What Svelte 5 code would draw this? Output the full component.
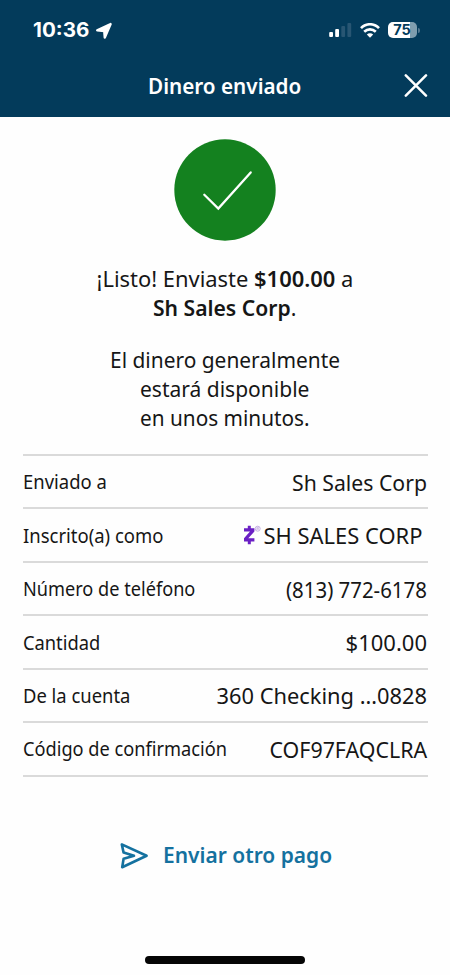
<script>
  const rows = [
    { label: 'Enviado a', lw: 83.5, value: 'Sh Sales Corp', vw: 135 },
    { label: 'Inscrito(a) como', lw: 140, value: 'SH SALES CORP', vw: 158.5, zelle: true },
    { label: 'Número de teléfono', lw: 172, value: '(813) 772-6178', vw: 141 },
    { label: 'Cantidad', lw: 77, value: '$100.00', vw: 81 },
    { label: 'De la cuenta', lw: 107.5, value: '360 Checking …0828', vw: 210.5 },
    { label: 'Código de confirmación', lw: 204, value: 'COF97FAQCLRA', vw: 157.5 }
  ];

  // Condenses a line of text horizontally to the given width.
  function fit(node, width) {
    node.style.transform = `scaleX(${width / node.offsetWidth})`;
  }
</script>

<div class="screen">
  <header>
    <div class="status">
      <div class="clock">
        <span class="time" use:fit={56}>10:36</span>
        <svg width="18" height="18" viewBox="0 0 18 18"><path d="M15.6 2 2.2 8.3 9.2 9 9.8 15.6Z" fill="#fff" stroke="#fff" stroke-width="2.4" stroke-linejoin="round" /></svg>
      </div>
      <div class="signals">
        <svg width="24" height="16" viewBox="0 0 24 16">
          <rect x="0.2" y="10" width="3.8" height="5" rx="1" fill="#fff" />
          <rect x="6.2" y="7" width="3.8" height="8" rx="1" fill="#fff" />
          <rect x="12.3" y="4" width="3.8" height="11" rx="1" fill="#285673" />
          <rect x="18.4" y="1" width="3.8" height="14" rx="1" fill="#285673" />
        </svg>
        <svg class="wifi" width="20" height="15" viewBox="0 0 20 15" fill="none" stroke="#fff" stroke-width="2.6">
          <path d="M1 5.2C6-.1 14-.1 19 5.2" />
          <path d="M4.2 8.8c3.4-3.3 8.2-3.3 11.6 0" />
          <path d="M10 14.8 6.8 11.4c1.8-1.7 4.6-1.7 6.4 0Z" fill="#fff" stroke="none" />
        </svg>
        <div class="battery"><span>75</span></div>
        <i class="nub"></i>
      </div>
    </div>
    <div class="bar">
      <h1 use:fit={153}>Dinero enviado</h1>
      <svg class="close" width="24" height="24" viewBox="0 0 24 24"><path d="M1.8 1.4 22 21.6M22 1.4 1.8 21.6" stroke="#fff" stroke-width="2.5" stroke-linecap="round" /></svg>
    </div>
  </header>

  <main>
    <svg class="check" width="102" height="102" viewBox="0 0 102 102">
      <circle cx="51" cy="51" r="50.7" fill="#14811f" />
      <path d="M30.3 55.8 44.3 69.6 76.7 33.4" fill="none" stroke="#fff" stroke-width="2.3" stroke-linecap="round" />
    </svg>

    <p class="done">
      <span use:fit={257}>¡Listo! Enviaste <b>$100.00</b> a</span>
      <span use:fit={143}><b>Sh Sales Corp</b>.</span>
    </p>
    <p class="note">
      <span use:fit={230}>El dinero generalmente</span>
      <span use:fit={169}>estará disponible</span>
      <span use:fit={170}>en unos minutos.</span>
    </p>

    <dl>
      {#each rows as row}
        <div class="row">
          <dt><span use:fit={row.lw}>{row.label}</span></dt>
          <dd class:zelle={row.zelle}>
            {#if row.zelle}
              <svg width="18" height="21" viewBox="0 0 18 21">
                <path d="M4.8.8h3v2.4h3.6v3.4L5.3 13.2h6.1v3.3H7.8v2.7h-3v-2.7H1v-3.3l6-6.6H1V3.2h3.8Z" fill="#6a1fc4" />
                <circle cx="14.7" cy="3.7" r="2.5" fill="none" stroke="#b79bdc" stroke-width=".8" />
                <path d="M13.9 5.2V2.4h1.1c1 0 1 1.4 0 1.4h-1.1m.9 0 .8 1.4" fill="none" stroke="#b79bdc" stroke-width=".6" />
              </svg>
            {/if}
            <span use:fit={row.vw}>{row.value}</span>
          </dd>
        </div>
      {/each}
    </dl>

    <div class="again">
      <svg width="29" height="28" viewBox="0 0 29 28" fill="none" stroke="#14719f" stroke-width="2.6" stroke-linejoin="round" stroke-linecap="round">
        <path d="M1.8 2.4 26.6 13.8 2.2 25.2 3.6 16.8 14 13.8 3.6 10.6Z" />
      </svg>
      <span use:fit={169.5}>Enviar otro pago</span>
    </div>
  </main>
  <div class="home"></div>
</div>

<style>
  :global(body) { background: #fefefe; }
  .screen {
    width: 450px; height: 975px; display: flex; flex-direction: column;
    overflow: hidden; background: #fefefe; color: #161616;
    font-family: "Noto Sans", sans-serif; font-size: 22px;
  }
  span, h1 { white-space: nowrap; }
  b { font-weight: 600; }
  header { height: 117px; flex: none; background: #033b5b; color: #fff; display: flex; flex-direction: column; }
  .status { height: 60px; display: flex; justify-content: space-between; padding: 0 30px 0 33px; }
  .clock { position: relative; display: flex; align-items: center; width: 100px; }
  .time { flex: none; font: 700 19.5px/24px Inter, sans-serif; transform-origin: left; }
  .clock svg { position: absolute; left: 61.5px; top: 21.5px; }
  .signals { display: flex; align-items: center; }
  .wifi { margin: 0 8px 0 7px; }
  .battery {
    width: 29px; height: 16px; border-radius: 5px; display: flex; justify-content: center;
    background: linear-gradient(90deg, #fff 76%, #7f9dae 76%);
  }
  .battery span { font: 700 14.5px/16px Inter, sans-serif; color: #033b5b; margin-right: 1px; }
  .nub { width: 2px; height: 5px; margin-left: 1px; border-radius: 0 2px 2px 0; background: #52778f; }
  .bar { height: 52px; display: grid; grid-template-columns: 1fr auto 1fr; align-items: center; }
  h1 { grid-column: 2; margin: 0; font-size: 21.5px; font-weight: 600; line-height: 30px; }
  .close { justify-self: end; margin-right: 22px; }
  main { flex: 1; display: flex; flex-direction: column; align-items: center; padding-top: 22px; }
  p { margin: 0; display: flex; flex-direction: column; align-items: center; line-height: 29px; }
  .done { margin-top: 23px; }
  .note { margin-top: 22.5px; }
  dl { width: 405px; margin: 22.5px 0 0; border-top: 2px solid #dadada; }
  .row { height: 53.45px; box-sizing: border-box; display: flex; justify-content: space-between; align-items: center; border-bottom: 2px solid #dadada; }
  dt { width: 0; font-size: 19px; line-height: 26px; padding-top: 1px; }
  dt span { display: inline-block; transform-origin: left; }
  dd { margin: 0; display: flex; align-items: center; line-height: 30px; padding-right: 0.5px; }
  dd span { transform-origin: right; }
  .zelle { padding-right: 5px; }
  .zelle svg { margin-right: 2.5px; }
  .again { margin-top: 62px; width: 211px; display: flex; align-items: center; color: #14719f; font-weight: 600; line-height: 30px; }
  .again svg { flex: none; margin: 3px 14px 0 0; }
  .again span { transform-origin: left; }
  .home { position: absolute; left: 145px; top: 956px; width: 160px; height: 8px; border-radius: 4px; background: #050505; }
</style>
